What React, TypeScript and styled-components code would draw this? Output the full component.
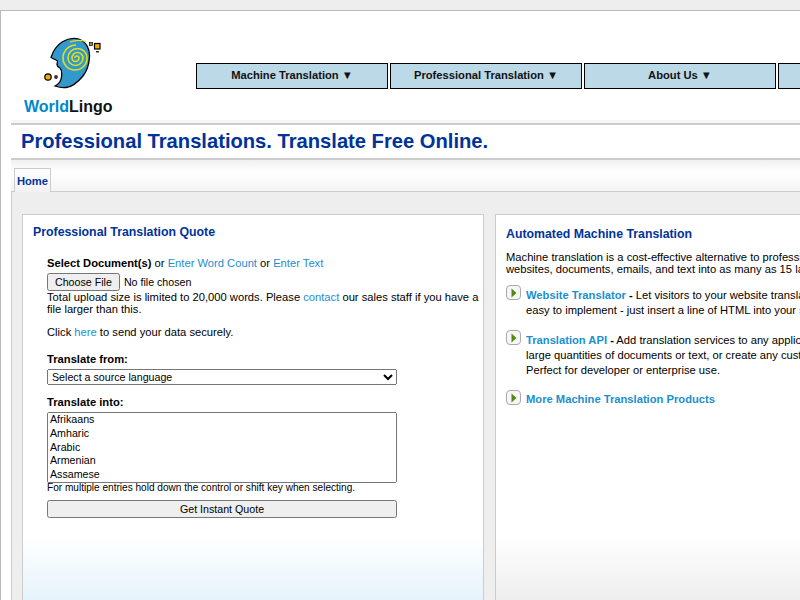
import styled, { createGlobalStyle } from 'styled-components';

const languages = ['Afrikaans', 'Amharic', 'Arabic', 'Armenian', 'Assamese', 'Azerbaijani', 'Basque'];
const navItems = ['Machine Translation', 'Professional Translation', 'About Us', 'Support'];

const Global = createGlobalStyle`
  html, body {
    margin: 0;
    padding: 0;
    height: 600px;
    overflow: hidden;
    background: #eeeeee;
  }
  body {
    font-family: "Liberation Sans", Arial, sans-serif;
    font-size: 11.2px;
    color: #000;
  }
`;

const Logo = () => (
  <svg width="62" height="54" viewBox="0 0 62 54">
    <path
      d="M8 21.5 C10 15 13 10 19 6 C24 3 31 1.5 37 3.5 C43 6 47 13 46.5 21 C46 29 44 35 40 40 C35 46 29 51 23 51.5 C19 52 15 51 12 50 C16 48 18 45 18.5 41 C19 37 19 34 17 32 C15 31 13.5 30 14 28 C14.5 26 15 25 14 24.5 Z"
      fill="#3399cc"
      stroke="#000"
      strokeWidth="1.3"
    />
    <path
      d="M32 22 A2 2 0 0 1 36 22 A3.5 3.5 0 0 1 29 22 A5.5 5.5 0 0 1 40 22 A7.5 7.5 0 0 1 25 22 A9.5 9.5 0 0 1 44 22 A12 12 0 0 1 20 22 A13 13 0 0 1 33 9"
      fill="none"
      stroke="#dde020"
      strokeWidth="1.6"
    />
    <path d="M27 6 C32 4 38 4 43 5.5" fill="none" stroke="#dde020" strokeWidth="1.2" />
    <circle cx="5" cy="41" r="3.2" fill="#eeaa00" stroke="#000" strokeWidth="1.2" />
    <circle cx="13" cy="41" r="1.9" fill="#333" />
    <rect x="46.5" y="6.5" width="3" height="3" fill="#aa8833" stroke="#000" strokeWidth="0.7" />
    <rect x="51.5" y="7.5" width="5.5" height="5.5" fill="#eeaa00" stroke="#000" strokeWidth="1.2" />
    <rect x="53" y="15" width="3" height="1.5" fill="#333" />
  </svg>
);

const Arrow = () => (
  <ArrowBox>
    <svg width="6" height="10" viewBox="0 0 6 10">
      <path d="M0.5 0.5 L5.5 5 L0.5 9.5 Z" fill="#558811" />
    </svg>
  </ArrowBox>
);

export default function App() {
  return (
    <>
      <Global />
      <Shell>
        <Header>
          <LogoBlock>
            <Logo />
            <Brand>
              <span>World</span>Lingo
            </Brand>
          </LogoBlock>
          <Nav>
            {navItems.map((item) => (
              <NavButton key={item}>{item} ▼</NavButton>
            ))}
          </Nav>
        </Header>

        <TitleBand>
          <PageTitle>Professional Translations. Translate Free Online.</PageTitle>
        </TitleBand>

        <TabStrip>
          <Tab>Home</Tab>
        </TabStrip>

        <TabBody>
          <QuoteCard>
            <CardTitle>Professional Translation Quote</CardTitle>
            <QuoteForm>
              <Line>
                <b>Select Document(s)</b> or <A>Enter Word Count</A> or <A>Enter Text</A>
              </Line>
              <FileInput type="file" />
              <Line>
                Total upload size is limited to 20,000 words. Please <A>contact</A> our sales staff if you have a
                file larger than this.
              </Line>
              <SecureLine>
                Click <A>here</A> to send your data securely.
              </SecureLine>
              <FieldLabel>Translate from:</FieldLabel>
              <SourceSelect defaultValue="">
                <option value="">Select a source language</option>
              </SourceSelect>
              <FieldLabel $gap={11}>Translate into:</FieldLabel>
              <TargetSelect multiple size={5}>
                {languages.map((l) => (
                  <option key={l}>{l}</option>
                ))}
              </TargetSelect>
              <Hint>For multiple entries hold down the control or shift key when selecting.</Hint>
              <SubmitButton type="button">Get Instant Quote</SubmitButton>
            </QuoteForm>
          </QuoteCard>

          <MachineCard>
            <CardTitle $top={12}>Automated Machine Translation</CardTitle>
            <Intro>
              Machine translation is a cost-effective alternative to professional translation. Translate
              <br />
              websites, documents, emails, and text into as many as 15 languages in real time.
            </Intro>
            <Product>
              <Arrow />
              <ProductText>
                <ProductLink>Website Translator</ProductLink> <b>-</b> Let visitors to your website translate it instantly. It is
                <br />
                easy to implement - just insert a line of HTML into your site.
              </ProductText>
            </Product>
            <Product>
              <Arrow />
              <ProductText>
                <ProductLink>Translation API</ProductLink> <b>-</b> Add translation services to any application, translate
                <br />
                large quantities of documents or text, or create any custom solution.
                <br />
                Perfect for developer or enterprise use.
              </ProductText>
            </Product>
            <Product>
              <Arrow />
              <ProductText $top={2}>
                <ProductLink>More Machine Translation Products</ProductLink>
              </ProductText>
            </Product>
          </MachineCard>
        </TabBody>
      </Shell>
    </>
  );
}

const Shell = styled.div`
  width: 1100px;
  height: 589px;
  margin-top: 10px;
  background: #fff;
  border-top: 1px solid #bbbbbb;
  border-left: 1px solid #bbbbbb;
  padding-left: 10px;
  overflow: hidden;
`;

const Header = styled.div`
  display: flex;
  align-items: flex-start;
  height: 112px;
`;

const LogoBlock = styled.div`
  width: 185px;
  padding-top: 25px;
  display: flex;
  flex-direction: column;
  align-items: flex-start;
  svg {
    margin-left: 32px;
    display: block;
  }
`;

const Brand = styled.div`
  margin: 7px 0 0 13px;
  font-size: 16px;
  line-height: 19px;
  font-weight: bold;
  color: #111;
  span {
    color: #0088cc;
  }
`;

const Nav = styled.div`
  display: flex;
  gap: 2px;
  padding-top: 52px;
`;

const NavButton = styled.div`
  width: 190px;
  height: 24px;
  border: 1px solid #000;
  background: #bcd9e8;
  font-size: 11.2px;
  font-weight: bold;
  line-height: 22px;
  text-align: center;
  color: #111;
`;

const TitleBand = styled.div`
  height: 33px;
  border-top: 2px solid #cccccc;
  border-bottom: 2px solid #cccccc;
  box-shadow: 0 -3px 0 #f6f6f6;
  padding-left: 10px;
  background: #fff;
`;

const PageTitle = styled.h1`
  margin: 0;
  font-size: 20.16px;
  line-height: 32px;
  font-weight: bold;
  color: #003399;
`;

const TabStrip = styled.div`
  height: 31px;
  display: flex;
  align-items: flex-end;
  padding-left: 3px;
  background: linear-gradient(#f0f0f0, #ffffff 12px, #f4f4f4);
`;

const Tab = styled.div`
  width: 35px;
  height: 23px;
  margin-bottom: -1px;
  position: relative;
  border: 1px solid #cccccc;
  border-bottom: none;
  background: linear-gradient(#ffffff, #f2f2f2);
  font-size: 11.2px;
  font-weight: bold;
  line-height: 25px;
  text-align: center;
  color: #003399;
`;

const TabBody = styled.div`
  height: 420px;
  border-top: 1px solid #cccccc;
  border-left: 1px solid #cccccc;
  background: #eeeeee;
  padding: 22px 0 0 10px;
  display: flex;
  align-items: stretch;
  gap: 11px;
`;

const Card = styled.div`
  border: 1px solid #cccccc;
  height: 420px;
  box-sizing: border-box;
`;

const QuoteCard = styled(Card)`
  width: 462px;
  background: linear-gradient(#ffffff 0, #ffffff 322px, #e6f3fb 385px);
  padding: 10px;
`;

const MachineCard = styled(Card)`
  width: 520px;
  background: linear-gradient(#ffffff 0, #ffffff 320px, #eeeeee 385px);
  padding: 0 10px;
`;

const CardTitle = styled.h2<{ $top?: number }>`
  margin: ${(p) => p.$top ?? 0}px 0 0;
  font-size: 12.32px;
  line-height: 15px;
  font-weight: bold;
  color: #003399;
`;

const QuoteForm = styled.div`
  margin: 11px 0 0 14px;
  padding-top: 6px;
  width: 432px;
`;

const Line = styled.div`
  font-size: 11.2px;
  line-height: 12px;
`;

const SecureLine = styled(Line)`
  margin-top: 11px;
`;

const A = styled.a`
  color: #1a8fd0;
`;

const FileInput = styled.input`
  display: block;
  margin: 4px 0 0;
  font-family: "Liberation Sans", Arial, sans-serif;
  font-size: 10.67px;
  height: 18px;
`;

const FieldLabel = styled.div<{ $gap?: number }>`
  margin-top: ${(p) => p.$gap ?? 15}px;
  font-size: 11.2px;
  font-weight: bold;
  line-height: 12px;
`;

const SourceSelect = styled.select`
  display: block;
  margin-top: 4px;
  width: 350px;
  height: 16px;
  padding: 0;
  font-family: "Liberation Sans", Arial, sans-serif;
  font-size: 10.67px;
`;

const TargetSelect = styled.select`
  display: block;
  margin-top: 4px;
  width: 350px;
  height: 71px;
  box-sizing: border-box;
  font-family: "Liberation Sans", Arial, sans-serif;
  font-size: 10.67px;
`;

const Hint = styled.div`
  font-size: 10.08px;
  line-height: 10px;
`;

const SubmitButton = styled.button`
  display: block;
  margin-top: 7px;
  width: 350px;
  height: 18px;
  padding: 0;
  font-family: "Liberation Sans", Arial, sans-serif;
  font-size: 10.67px;
`;

const Intro = styled.p`
  margin: 9px 0 0;
  font-size: 11.2px;
  line-height: 12px;
`;

const Product = styled.div`
  display: flex;
  gap: 5px;
  margin-top: 12px;
  &:first-of-type {
    margin-top: 10px;
  }
`;

const ArrowBox = styled.div`
  width: 13px;
  height: 13px;
  flex: none;
  border: 1px solid #aaaaaa;
  border-radius: 4px;
  background: #f6f6f6;
  display: flex;
  align-items: center;
  justify-content: center;
`;

const ProductText = styled.div<{ $top?: number }>`
  margin-top: ${(p) => p.$top ?? 3}px;
  font-size: 11.2px;
  line-height: 15px;
  white-space: nowrap;
`;

const ProductLink = styled.a`
  color: #1a8fd0;
  font-weight: bold;
`;
